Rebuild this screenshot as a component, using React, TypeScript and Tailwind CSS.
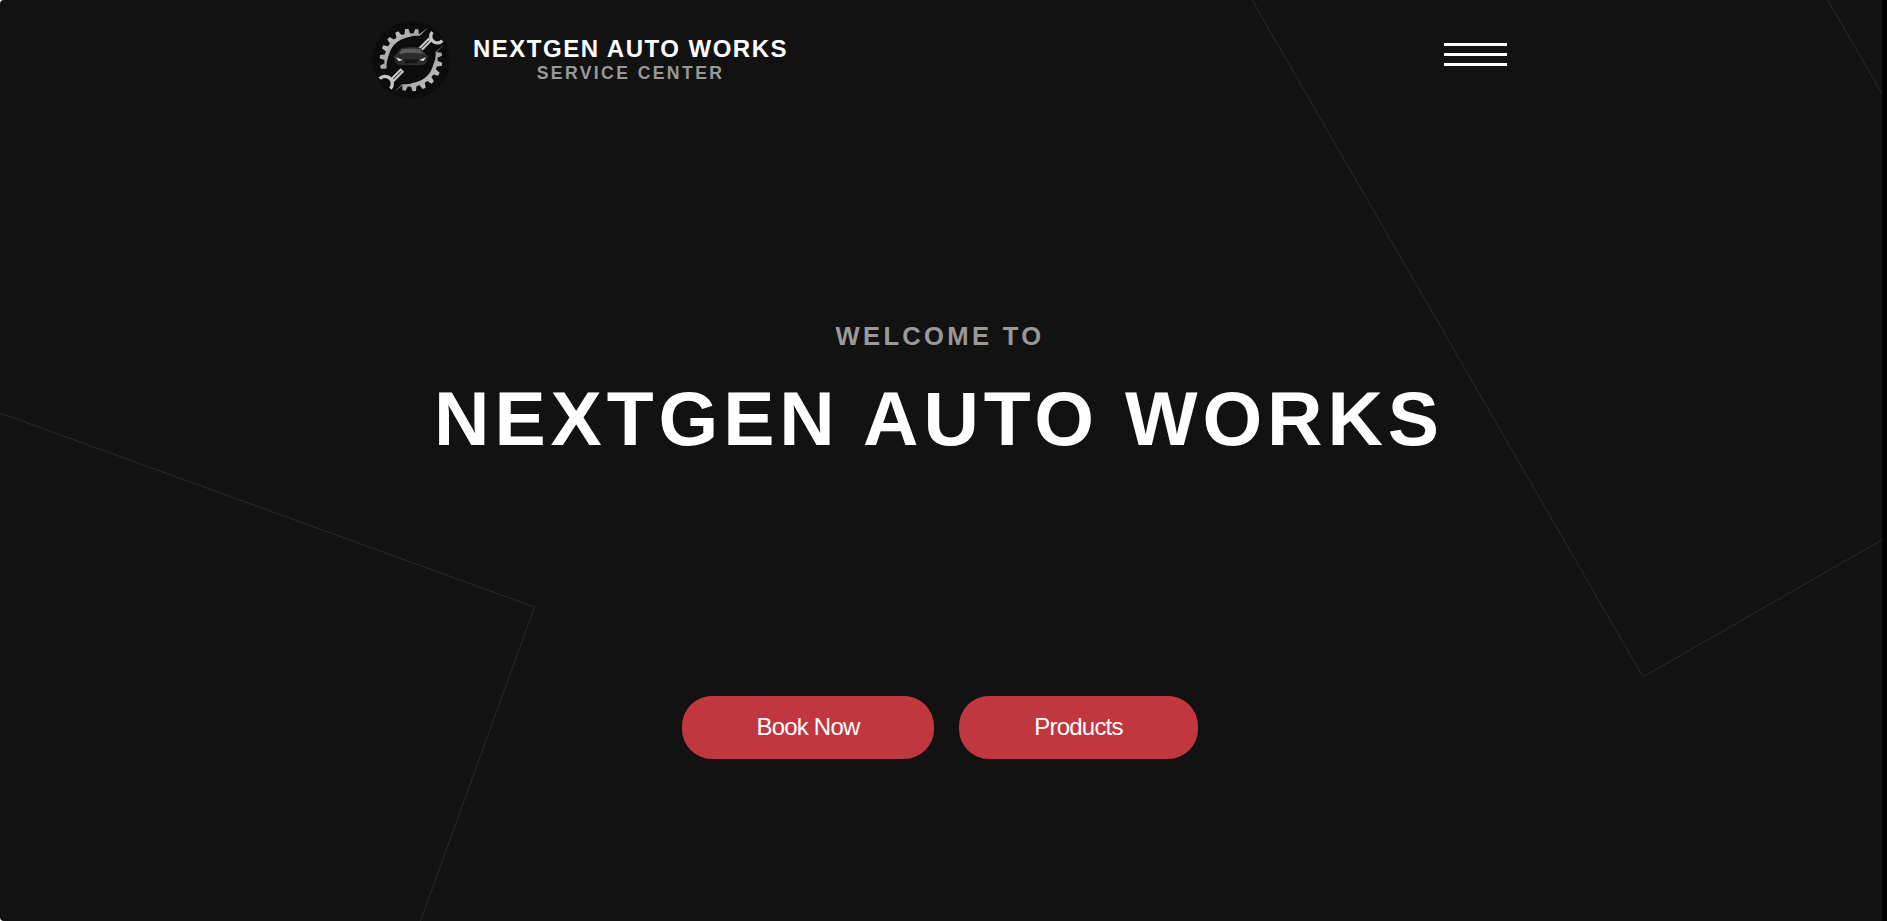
const CX = 120;
const CY = 120;

function pt(deg: number, r: number) {
  const a = (deg * Math.PI) / 180;
  return `${(CX + r * Math.sin(a)).toFixed(1)},${(CY - r * Math.cos(a)).toFixed(1)}`;
}

function crescent(from: number, to: number) {
  const pts: string[] = [pt(from, 110)];
  const step = 19;
  for (let d = from + 8; d < to - 10; d += step) {
    pts.push(pt(d, 80), pt(d + 3, 94), pt(d + 9, 94), pt(d + 12, 80));
  }
  pts.push(pt(to, 110));
  for (let d = to - 8; d > from + 4; d -= 8) {
    const edge = Math.min(d - from, to - d);
    pts.push(pt(d, 68 + Math.max(0, 12 - edge / 3)));
  }
  return pts.join(" ");
}

function Logo() {
  return (
    <svg width="80" height="80" viewBox="0 0 240 240" className="shrink-0">
      <defs>
        <linearGradient id="silver" x1="0" y1="0" x2="1" y2="1">
          <stop offset="0" stopColor="#cfcfcf" />
          <stop offset="0.5" stopColor="#a2a2a2" />
          <stop offset="1" stopColor="#d4d4d4" />
        </linearGradient>
      </defs>
      <circle cx="120" cy="120" r="116" fill="#0c0c0c" />
      <polygon points={crescent(243, 388)} fill="url(#silver)" />
      <polygon points={crescent(65, 208)} fill="url(#silver)" />
      <g fill="none" stroke="#c6c6c6" strokeWidth="10">
        <path d="M146 90 L178 58" strokeWidth="15" />
        <path d="M150 86 L174 62" stroke="#0c0c0c" strokeWidth="3" />
        <path d="M184 36 A19 19 0 1 0 214 62" />
        <path d="M94 150 L62 182" strokeWidth="15" />
        <path d="M90 154 L66 178" stroke="#0c0c0c" strokeWidth="3" />
        <path d="M58 206 A19 19 0 1 0 26 176" />
      </g>
      <path d="M68 110 L82 94 L92 84 Q120 78 148 84 L158 94 L172 110 L166 128 Q160 134 148 136 L92 136 Q78 134 74 128 Z" fill="#2c2c2c" />
      <path d="M92 88 Q120 83 148 88 L156 102 Q120 95 84 102 Z" fill="#5c5c5c" />
      <path d="M98 118 L142 118 L137 130 L103 130 Z" fill="#161616" />
      <path d="M75 112 L95 120 L83 123 Z M165 112 L145 120 L157 123 Z" fill="#e8e8e8" />
    </svg>
  );
}

export default function App() {
  return (
    <div className="relative h-[921px] w-full overflow-hidden rounded-l-[4px] bg-[#121212] font-['Liberation_Sans',Arial,sans-serif] text-white">
      <svg width="1887" height="921" className="absolute inset-0" fill="none" stroke="#2a2a2a" strokeWidth="1">
        <polyline points="1252,0 1643,677 1887,537" />
        <line x1="1827.5" y1="0" x2="1887" y2="102" />
        <polyline points="0,413 534.5,607 420.5,921" />
      </svg>
      <div className="absolute right-0 top-0 h-full w-[5px] bg-black" />

      <header className="relative ml-[371px] flex h-[120px] w-[1136px] items-center justify-between">
        <div className="flex items-center gap-[22px]">
          <Logo />
          <div className="flex flex-col items-center">
            <span className="text-[24px] font-bold leading-[26px] tracking-[1.5px]">NEXTGEN AUTO WORKS</span>
            <span className="text-[17.6px] font-bold leading-[22px] tracking-[2.4px] text-[#999999]">SERVICE CENTER</span>
          </div>
        </div>
        <div className="mb-[11px] flex w-[63px] flex-col gap-[7px]">
          <span className="h-[3px] bg-white" />
          <span className="h-[3px] bg-white" />
          <span className="h-[3px] bg-white" />
        </div>
      </header>

      <main className="absolute inset-x-0 top-0 flex flex-col items-center pr-[7px]">
        <p className="mt-[320px] text-[25.6px] font-bold leading-[32px] tracking-[3.3px] text-[#999999]">WELCOME TO</p>
        <h1 className="mr-[2px] mt-[21px] text-[76.8px] font-bold leading-[90px] tracking-[4.9px]">NEXTGEN AUTO WORKS</h1>
        <div className="mt-[233px] flex gap-[25px]">
          <a className="flex h-[63px] w-[252px] items-center justify-center rounded-[30px] bg-[#c03740] pb-[1px] text-[24px] tracking-[-0.8px]">Book Now</a>
          <a className="flex h-[63px] w-[239px] items-center justify-center rounded-[30px] bg-[#c03740] pb-[1px] text-[24px] tracking-[-0.8px]">Products</a>
        </div>
      </main>
    </div>
  );
}
